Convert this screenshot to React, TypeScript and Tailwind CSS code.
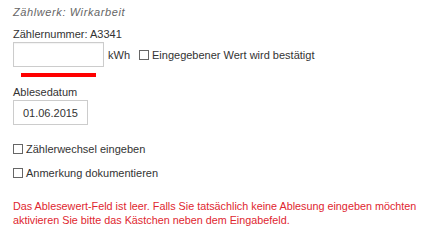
import React from 'react';

function Check({ label }: { label: string }) {
  return (
    <label className="flex items-center gap-[3px]">
      <span className="inline-block w-[10px] h-[10px] border border-[#666] bg-white" />
      <span>{label}</span>
    </label>
  );
}

export default function App() {
  return (
    <div
      className="w-[438px] h-[247px] bg-white text-[#333] text-[11px] leading-[14px] px-[13px] pt-[5px]"
      style={{ fontFamily: '"Liberation Sans", Arial, sans-serif' }}
    >
      <div className="italic text-[#666] tracking-[0.6px] h-[15px]">Zählwerk: Wirkarbeit</div>

      <div className="mt-[7px]">Zählernummer: A3341</div>
      <div className="flex items-center mt-[1px]">
        <div className="w-[91px] h-[25px] border border-[#ccc] bg-white shadow-[inset_0_1px_1px_rgba(0,0,0,0.05)]" />
        <span className="ml-[4px]">kWh</span>
        <div className="ml-[9px]">
          <Check label="Eingegebener Wert wird bestätigt" />
        </div>
      </div>
      <div className="ml-[8px] mt-[6px] w-[75px] h-[4px] bg-[#f00]" />

      <div className="mt-[8px]">Ablesedatum</div>
      <div className="mt-[1px] w-[75px] h-[25px] border border-[#ccc] flex items-center justify-end pr-[9px]">
        01.06.2015
      </div>

      <div className="mt-[17px]">
        <Check label="Zählerwechsel eingeben" />
      </div>
      <div className="mt-[10px]">
        <Check label="Anmerkung dokumentieren" />
      </div>

      <p className="mt-[19px] text-[#e0262f] text-[10.8px] leading-[14px]">
        Das Ablesewert-Feld ist leer. Falls Sie tatsächlich keine Ablesung eingeben möchten
        <br />
        aktivieren Sie bitte das Kästchen neben dem Eingabefeld.
      </p>
    </div>
  );
}
